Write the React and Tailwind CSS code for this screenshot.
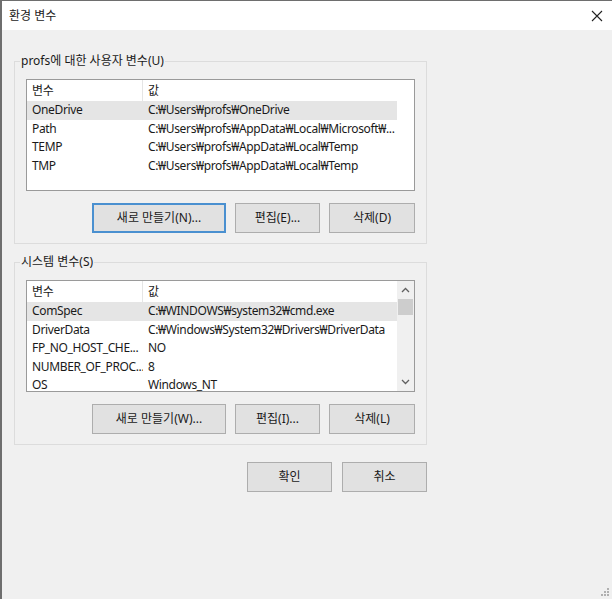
import React from 'react';

const font = { fontFamily: '"Noto Sans", "Noto Sans CJK KR", sans-serif' };

const userVars = [
    { name: 'OneDrive', value: 'C:₩Users₩profs₩OneDrive' },
    { name: 'Path', value: 'C:₩Users₩profs₩AppData₩Local₩Microsoft₩...' },
    { name: 'TEMP', value: 'C:₩Users₩profs₩AppData₩Local₩Temp' },
    { name: 'TMP', value: 'C:₩Users₩profs₩AppData₩Local₩Temp' },
];

const systemVars = [
    { name: 'ComSpec', value: 'C:₩WINDOWS₩system32₩cmd.exe' },
    { name: 'DriverData', value: 'C:₩Windows₩System32₩Drivers₩DriverData' },
    { name: 'FP_NO_HOST_CHE...', value: 'NO' },
    { name: 'NUMBER_OF_PROC...', value: '8' },
    { name: 'OS', value: 'Windows_NT' },
];

const Button = ({ children, width, focused }) => (
    <button
        className={
            'h-[30px] bg-[#e1e1e1] text-[12px] text-[#1a1a1a] ' +
            (focused ? 'border-2 border-[#4a90d0]' : 'border border-[#adadad]')
        }
        style={{ width }}
    >
        {children}
    </button>
);

// list view with header row, selected first row
const VarList = ({ rows, scroll }) => (
    <div className="flex h-[112px] border border-[#9a9a9a] bg-white overflow-hidden">
        <div className="w-[370px] shrink-0 text-[12px] tracking-[-0.35px] text-[#1a1a1a]">
            <div className="flex h-[21px] items-center">
                <div className="w-[116px] shrink-0 pl-[5px] border-r border-[#e5e5e5] h-full flex items-center">변수</div>
                <div className="pl-[5px]">값</div>
            </div>
            {rows.map((r, i) => (
                <div
                    key={r.name}
                    className={'flex h-[18.5px] items-center ' + (i === 0 ? 'bg-[#e5e5e5]' : '')}
                >
                    <div className="w-[116px] shrink-0 pl-[5px] whitespace-nowrap overflow-hidden">{r.name}</div>
                    <div className="pl-[5px] whitespace-nowrap">{r.value}</div>
                </div>
            ))}
        </div>
        <div className="flex-1" />
        {scroll && (
            <div className="w-[17px] flex flex-col items-center bg-[#f0f0f0]">
                <svg width="9" height="17" viewBox="0 0 9 17" className="mt-[1px]">
                    <path d="M1 10 L4.5 6.5 L8 10" fill="none" stroke="#606060" strokeWidth="1.3" />
                </svg>
                <div className="w-[15px] h-[16px] bg-[#cdcdcd]" />
                <div className="flex-1" />
                <svg width="9" height="17" viewBox="0 0 9 17" className="mb-[1px]">
                    <path d="M1 7 L4.5 10.5 L8 7" fill="none" stroke="#606060" strokeWidth="1.3" />
                </svg>
            </div>
        )}
    </div>
);

const Group = ({ label, children }) => (
    <fieldset className="border border-[#dcdcdc] px-[11px] pb-[10px] pt-[10px] mx-[14px] w-[413px]">
        <legend className="ml-[-6px] px-[1px] text-[12px] text-[#1a1a1a] leading-[16px]">{label}</legend>
        {children}
    </fieldset>
);

const App = () => {
    return (
        <div className="w-[612px] h-[599px] bg-[#f0f0f0] border-l-2 border-t border-[#6e6e6e] flex flex-col relative" style={font}>
            {/* title bar */}
            <div className="h-[29px] bg-white flex items-center justify-between pl-[7px] pr-[8px] shrink-0">
                <span className="text-[12px] text-[#1a1a1a]">환경 변수</span>
                <svg width="14" height="14" viewBox="0 0 14 14">
                    <path d="M2 2 L12 12 M12 2 L2 12" stroke="#222" strokeWidth="1.1" />
                </svg>
            </div>

            <div className="pt-[23px] -ml-[2px]">
                <Group label="profs에 대한 사용자 변수(U)">
                    <VarList rows={userVars} />
                    <div className="flex justify-end gap-[9px] mt-[12px]">
                        <Button width={134} focused>새로 만들기(N)...</Button>
                        <Button width={85}>편집(E)...</Button>
                        <Button width={86}>삭제(D)</Button>
                    </div>
                </Group>

                <div className="h-[10px]" />

                <Group label="시스템 변수(S)">
                    <VarList rows={systemVars} scroll />
                    <div className="flex justify-end gap-[9px] mt-[12px]">
                        <Button width={134}>새로 만들기(W)...</Button>
                        <Button width={85}>편집(I)...</Button>
                        <Button width={86}>삭제(L)</Button>
                    </div>
                </Group>

                <div className="flex justify-end gap-[10px] w-[427px] mt-[17px]">
                    <Button width={85}>확인</Button>
                    <Button width={85}>취소</Button>
                </div>
            </div>

            {/* size grip */}
            <svg width="8" height="8" viewBox="0 0 8 8" className="absolute right-[3px] bottom-[3px]">
                <rect x="6" y="0" width="2" height="2" fill="#b0b0b0" />
                <rect x="3" y="3" width="2" height="2" fill="#b0b0b0" />
                <rect x="6" y="3" width="2" height="2" fill="#b0b0b0" />
                <rect x="0" y="6" width="2" height="2" fill="#b0b0b0" />
                <rect x="3" y="6" width="2" height="2" fill="#b0b0b0" />
                <rect x="6" y="6" width="2" height="2" fill="#b0b0b0" />
            </svg>
        </div>
    );
};

export default App;
